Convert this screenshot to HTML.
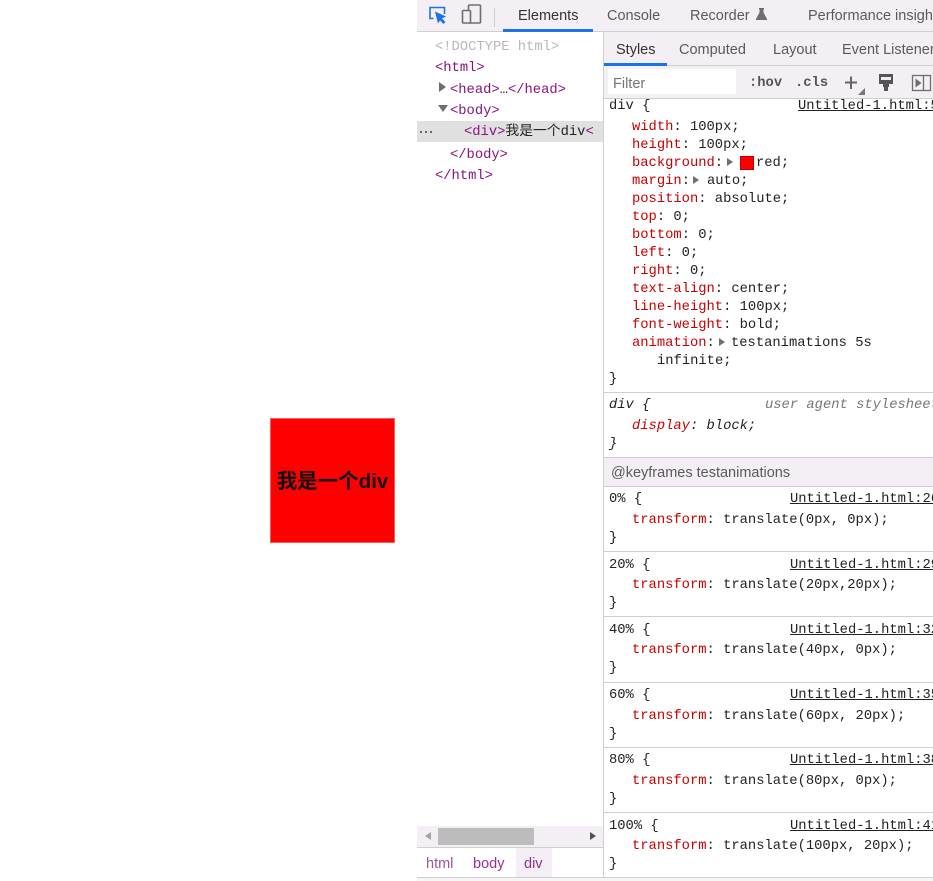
<!DOCTYPE html>
<html><head><meta charset="utf-8">
<style>
html,body{margin:0;padding:0;background:#fff;}
body{width:933px;height:881px;position:relative;overflow:hidden;font-family:"Liberation Sans","Noto Sans CJK SC",sans-serif;}
.a{position:absolute;}
.l{position:absolute;white-space:pre;font:13.8px/18px "Liberation Mono","Noto Sans CJK SC",monospace;color:#222;margin-top:2px;}
.p{color:#c80000}.t{color:#881280}.g{color:#a9a9a9}.i{font-style:italic}
.u{text-decoration:underline;}
.s{position:absolute;white-space:pre;font:14.5px/18px "Liberation Sans",sans-serif;color:#5a5a5a;margin-top:1px;}
.h{position:absolute;left:604px;width:329px;height:1px;background:#cfcfcf;}
.tri{position:absolute;width:0;height:0;}
.r{border-left:6px solid #6e6e6e;border-top:4px solid transparent;border-bottom:4px solid transparent;}
</style></head><body>
<div class="a" style="left:270px;top:418px;width:125px;height:125px;background:#f00;box-shadow:inset 0 0 0 1px #ff5a5a;"></div>
<div class="a" style="left:270px;top:419px;width:125px;height:125px;line-height:125px;text-align:center;font-weight:bold;font-size:20.5px;color:#111;font-family:'Liberation Sans','Noto Sans CJK SC',sans-serif;white-space:nowrap;">我是一个div</div>

<!-- top bar -->
<div class="a" style="left:417px;top:0;width:516px;height:31px;background:#f3eff5;border-bottom:1px solid #cfcfcf;"></div>
<svg class="a" style="left:427px;top:4px" width="72" height="24" viewBox="0 0 72 24" fill="none">
<path d="M6.500 14.500H3V3.500H17.500V10" stroke="#1a73e8" stroke-width="1.600"/>
<path d="M8 7.500L19 12.500L15 14.500L18.500 18L16.500 20L13 16.500L11 19.500Z" fill="#1a73e8"/>
<rect x="41.500" y="1" width="12" height="18" rx="1" stroke="#6e6e6e" stroke-width="1.600"/>
<rect x="35.500" y="6.500" width="8" height="12.500" rx="1" fill="#f3eff5" stroke="#6e6e6e" stroke-width="1.600"/>
<path d="M67.500 4V23" stroke="#cfcfcf"/>
</svg>
<div class="s" style="left:518px;top:6px;color:#333;">Elements</div>
<div class="a" style="left:503px;top:29px;width:90px;height:3px;background:#1a73e8;"></div>
<div class="s" style="left:607px;top:6px;">Console</div>
<div class="s" style="left:690px;top:6px;">Recorder</div>
<svg class="a" style="left:756px;top:8px" width="11" height="12" viewBox="0 0 11 12"><path d="M3 0H8V1L7.500 1.500V4.500L11 11V12H0V11L3.500 4.500V1.500L3 1Z" fill="#6e6e6e"/></svg>
<div class="s" style="left:808px;top:6px;">Performance insights</div>

<!-- elements panel -->
<div class="l" style="left:435px;top:37px;color:#b8b8b8;">&lt;!DOCTYPE html&gt;</div>
<div class="l t" style="left:435px;top:58px;">&lt;html&gt;</div>
<div class="tri r" style="left:439px;top:82px;border-left-width:7px;border-top-width:5px;border-bottom-width:5px;"></div>
<div class="l t" style="left:450px;top:80px;">&lt;head&gt;<span style="color:#222">…</span>&lt;/head&gt;</div>
<div class="tri" style="left:438px;top:105px;border-top:7px solid #6e6e6e;border-left:5px solid transparent;border-right:5px solid transparent;"></div>
<div class="l t" style="left:450px;top:101px;">&lt;body&gt;</div>
<div class="a" style="left:417px;top:121px;width:186px;height:21px;background:#e0e0e0;overflow:hidden;">
<div class="l t" style="left:47px;top:1px;">&lt;div&gt;<span style="color:#222">我是一个div</span>&lt;</div>
<div class="a" style="left:3px;top:10px;width:2px;height:2px;background:#666;"></div>
<div class="a" style="left:8px;top:10px;width:2px;height:2px;background:#666;"></div>
<div class="a" style="left:13px;top:10px;width:2px;height:2px;background:#666;"></div>
</div>
<div class="l t" style="left:450px;top:145px;">&lt;/body&gt;</div>
<div class="l t" style="left:435px;top:166px;">&lt;/html&gt;</div>

<!-- scrollbar + breadcrumb -->
<div class="a" style="left:417px;top:826px;width:186px;height:21px;background:#f3eff5;border-bottom:1px solid #cfcfcf;"></div>
<div class="a" style="left:438px;top:828px;width:96px;height:17px;background:#bcbcbc;"></div>
<div class="tri" style="left:425px;top:832px;border-right:6px solid #a3a3a3;border-top:4px solid transparent;border-bottom:4px solid transparent;"></div>
<div class="tri r" style="left:590px;top:832px;border-left-color:#505050;"></div>
<div class="a" style="left:516px;top:848px;width:36px;height:30px;background:#f3eff5;"></div>
<div class="s" style="left:426px;top:854px;color:#a2509f;">html</div>
<div class="s" style="left:473px;top:854px;color:#962f92;">body</div>
<div class="s" style="left:524px;top:854px;color:#962f92;">div</div>
<div class="a" style="left:417px;top:877px;width:516px;height:1px;background:#cfcfcf;"></div>
<div class="a" style="left:417px;top:878px;width:516px;height:3px;background:#f6f4f7;"></div>

<!-- styles panel -->
<div class="a" style="left:603px;top:32px;width:1px;height:846px;background:#cfcfcf;"></div>
<div class="a" style="left:604px;top:32px;width:329px;height:33px;background:#f3eff5;border-bottom:1px solid #cfcfcf;"></div>
<div class="s" style="left:616px;top:40px;color:#333;">Styles</div>
<div class="a" style="left:604px;top:63px;width:63px;height:3px;background:#1a73e8;"></div>
<div class="s" style="left:679px;top:40px;">Computed</div>
<div class="s" style="left:773px;top:40px;">Layout</div>
<div class="s" style="left:842px;top:40px;">Event Listeners</div>
<div class="a" style="left:604px;top:66px;width:329px;height:32px;background:#f3eff5;border-bottom:1px solid #cfcfcf;"></div>
<div class="a" style="left:608px;top:69px;width:128px;height:25px;background:#fff;"></div>
<div class="s" style="left:613px;top:74px;color:#757575;">Filter</div>
<div class="l" style="left:749px;top:73px;font-weight:bold;color:#555;">:hov</div>
<div class="l" style="left:795px;top:73px;font-weight:bold;color:#555;">.cls</div>
<svg class="a" style="left:842px;top:72px" width="91" height="24" viewBox="0 0 91 24" fill="none">
<path d="M9 4.500V17M3 10.500H15" stroke="#666" stroke-width="2"/>
<path d="M23 16L16 23H23Z" fill="#777"/>
<path d="M37 2H51V12H47V15H46V19H42V15H41V12H37Z" fill="#555"/>
<path d="M39 5H49V8H39Z" fill="#eee"/>
<rect x="70.500" y="3.500" width="18" height="15" stroke="#6e6e6e" stroke-width="1.300"/>
<path d="M81.500 3.500V18.500" stroke="#6e6e6e" stroke-width="1.300"/>
<path d="M73.500 6.500L79.500 11L73.500 15.500Z" fill="#6e6e6e"/>
</svg>

<div class="l" style="left:609px;top:96px;">div {</div>
<div class="l u" style="left:798px;top:96px;">Untitled-1.html:5</div>
<div class="l" style="left:632px;top:117px;"><span class="p">width</span>: 100px;</div>
<div class="l" style="left:632px;top:135px;"><span class="p">height</span>: 100px;</div>
<div class="l" style="left:632px;top:153px;"><span class="p">background</span>:</div>
<div class="tri r" style="left:727px;top:158px;"></div>
<div class="a" style="left:740px;top:156px;width:12px;height:12px;background:#f00;border:.5px solid #b00;"></div>
<div class="l" style="left:756px;top:153px;">red;</div>
<div class="l" style="left:632px;top:171px;"><span class="p">margin</span>:</div>
<div class="tri r" style="left:693px;top:176px;"></div>
<div class="l" style="left:707px;top:171px;">auto;</div>
<div class="l" style="left:632px;top:189px;"><span class="p">position</span>: absolute;</div>
<div class="l" style="left:632px;top:207px;"><span class="p">top</span>: 0;</div>
<div class="l" style="left:632px;top:225px;"><span class="p">bottom</span>: 0;</div>
<div class="l" style="left:632px;top:243px;"><span class="p">left</span>: 0;</div>
<div class="l" style="left:632px;top:261px;"><span class="p">right</span>: 0;</div>
<div class="l" style="left:632px;top:279px;"><span class="p">text-align</span>: center;</div>
<div class="l" style="left:632px;top:297px;"><span class="p">line-height</span>: 100px;</div>
<div class="l" style="left:632px;top:315px;"><span class="p">font-weight</span>: bold;</div>
<div class="l" style="left:632px;top:333px;"><span class="p">animation</span>:</div>
<div class="tri r" style="left:719px;top:338px;"></div>
<div class="l" style="left:731px;top:333px;">testanimations 5s</div>
<div class="l" style="left:657px;top:351px;">infinite;</div>
<div class="l" style="left:609px;top:369px;">}</div>
<div class="h" style="top:392px;"></div>

<div class="l i" style="left:609px;top:395px;">div {</div>
<div class="l i" style="left:765px;top:395px;color:#777;">user agent stylesheet</div>
<div class="l i" style="left:632px;top:416px;"><span class="p">display</span>: block;</div>
<div class="l i" style="left:609px;top:434px;">}</div>

<div class="a" style="left:604px;top:457px;width:329px;height:28px;background:#f3eff5;border-top:1px solid #cfcfcf;border-bottom:1px solid #cfcfcf;"></div>
<div class="s" style="left:611px;top:463px;">@keyframes testanimations</div>

<div class="l" style="left:609px;top:489px;">0% {</div>
<div class="l u" style="left:790px;top:489px;">Untitled-1.html:26</div>
<div class="l" style="left:632px;top:510px;"><span class="p">transform</span>: translate(0px, 0px);</div>
<div class="l" style="left:609px;top:528px;">}</div>
<div class="h" style="top:551px;"></div>

<div class="l" style="left:609px;top:555px;">20% {</div>
<div class="l u" style="left:790px;top:555px;">Untitled-1.html:29</div>
<div class="l" style="left:632px;top:575px;"><span class="p">transform</span>: translate(20px,20px);</div>
<div class="l" style="left:609px;top:593px;">}</div>
<div class="h" style="top:616px;"></div>

<div class="l" style="left:609px;top:620px;">40% {</div>
<div class="l u" style="left:790px;top:620px;">Untitled-1.html:32</div>
<div class="l" style="left:632px;top:640px;"><span class="p">transform</span>: translate(40px, 0px);</div>
<div class="l" style="left:609px;top:658px;">}</div>
<div class="h" style="top:682px;"></div>

<div class="l" style="left:609px;top:685px;">60% {</div>
<div class="l u" style="left:790px;top:685px;">Untitled-1.html:35</div>
<div class="l" style="left:632px;top:706px;"><span class="p">transform</span>: translate(60px, 20px);</div>
<div class="l" style="left:609px;top:724px;">}</div>
<div class="h" style="top:747px;"></div>

<div class="l" style="left:609px;top:750px;">80% {</div>
<div class="l u" style="left:790px;top:750px;">Untitled-1.html:38</div>
<div class="l" style="left:632px;top:771px;"><span class="p">transform</span>: translate(80px, 0px);</div>
<div class="l" style="left:609px;top:789px;">}</div>
<div class="h" style="top:812px;"></div>

<div class="l" style="left:609px;top:816px;">100% {</div>
<div class="l u" style="left:790px;top:816px;">Untitled-1.html:41</div>
<div class="l" style="left:632px;top:836px;"><span class="p">transform</span>: translate(100px, 20px);</div>
<div class="l" style="left:609px;top:854px;">}</div>
</body></html>
